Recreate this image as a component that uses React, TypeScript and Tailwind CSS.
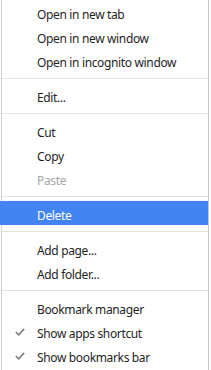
import React from "react";

type Item =
  | { kind: "sep" }
  | { kind: "item"; label: string; disabled?: boolean; active?: boolean; checked?: boolean };

const items: Item[] = [
  { kind: "item", label: "Open in new tab" },
  { kind: "item", label: "Open in new window" },
  { kind: "item", label: "Open in incognito window" },
  { kind: "sep" },
  { kind: "item", label: "Edit..." },
  { kind: "sep" },
  { kind: "item", label: "Cut" },
  { kind: "item", label: "Copy" },
  { kind: "item", label: "Paste", disabled: true },
  { kind: "sep" },
  { kind: "item", label: "Delete", active: true },
  { kind: "sep" },
  { kind: "item", label: "Add page..." },
  { kind: "item", label: "Add folder..." },
  { kind: "sep" },
  { kind: "item", label: "Bookmark manager" },
  { kind: "item", label: "Show apps shortcut", checked: true },
  { kind: "item", label: "Show bookmarks bar", checked: true },
];

function Check() {
  return (
    <svg width="10" height="8" viewBox="0 0 10 8" className="shrink-0">
      <path d="M0.8 4 L3.6 6.8 L9.2 1" fill="none" stroke="#7b7b7b" strokeWidth="1.6" />
    </svg>
  );
}

export default function App() {
  return (
    <div className="w-[211px] h-[370px] bg-white overflow-hidden font-['Noto_Sans',sans-serif]">
      <div className="w-[209px] h-full bg-white border-r border-[#c6c6c6] shadow-[inset_1px_0_0_#ffffff,inset_2px_0_0_#d0d0d0]">
        {items.map((it, i) =>
          it.kind === "sep" ? (
            <div key={i} className="pt-[6px] pb-[4px]">
              <div className="h-px bg-[#e2e2e2]" />
            </div>
          ) : (
            <div
              key={i}
              className={`h-6 flex items-center pt-[6px] text-[12px] tracking-[-0.35px] leading-none ${
                it.active ? "bg-[#4284f2] text-white" : it.disabled ? "text-[#a6a6a6]" : "text-[#1e1e1e]"
              }`}
            >
              <span className="w-[37px] flex justify-center pl-[2px] pb-[4px]">{it.checked ? <Check /> : null}</span>
              <span className="whitespace-nowrap">{it.label}</span>
            </div>
          )
        )}
      </div>
    </div>
  );
}
